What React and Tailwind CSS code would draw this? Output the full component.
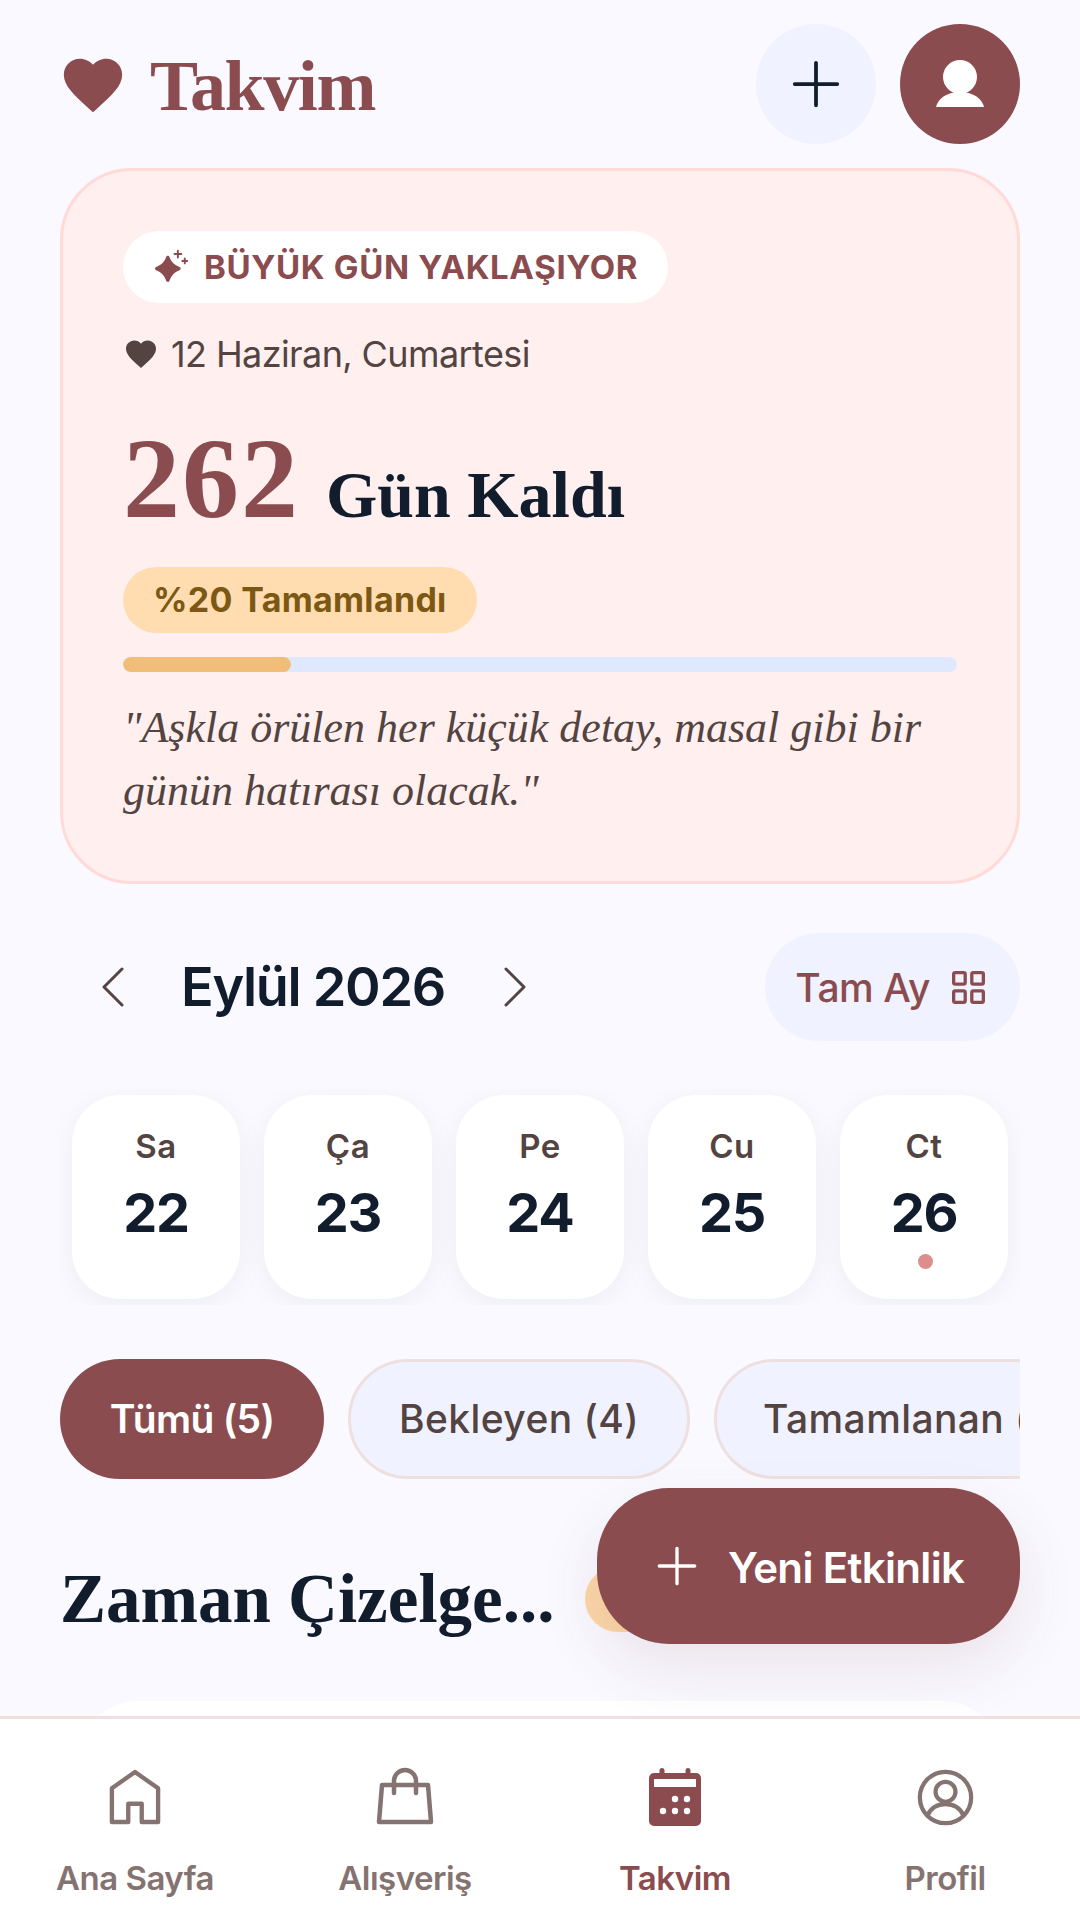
import React from "react";

const days = [
  { name: "Sa", num: "22" },
  { name: "Ça", num: "23" },
  { name: "Pe", num: "24" },
  { name: "Cu", num: "25" },
  { name: "Ct", num: "26", dot: true },
];

function HeartIcon({ className }) {
  return (
    <svg viewBox="0 0 24 24" className={className} fill="currentColor">
      <path d="M12 21.35l-1.45-1.32C5.4 15.36 2 12.28 2 8.5 2 5.42 4.42 3 7.5 3c1.74 0 3.41.81 4.5 2.09C13.09 3.81 14.76 3 16.5 3 19.58 3 22 5.42 22 8.5c0 3.78-3.4 6.86-8.55 11.54L12 21.35z" />
    </svg>
  );
}

function PlusIcon({ className, width = 1.5 }) {
  return (
    <svg viewBox="0 0 24 24" className={className} fill="none" stroke="currentColor" strokeWidth={width} strokeLinecap="round">
      <path d="M12 3.500v17M3.500 12h17" />
    </svg>
  );
}

function NavItem({ label, active, children }) {
  return (
    <div className={`flex flex-col items-center w-[270px] ${active ? "text-[#8B4C4F]" : "text-[#857371]"}`}>
      <div className="h-[78px] flex items-center justify-center">{children}</div>
      <span className="mt-[22px] text-[33px] font-semibold leading-[40px] tracking-[-0.5px]">{label}</span>
    </div>
  );
}

export default function App() {
  return (
    <div className="relative w-[1080px] h-[1920px] flex flex-col overflow-hidden bg-[#F9F9FF] font-['Inter',sans-serif]">
      <main className="h-[1716px] shrink-0 overflow-hidden px-[60px] pt-[24px]">
        {/* Header */}
        <header className="flex items-center justify-between h-[120px]">
          <div className="flex items-center">
            <HeartIcon className="w-[70px] h-[70px] text-[#8B4C4F] -ml-[2px] mt-[2px]" />
            <h1 className="ml-[22px] mt-[3px] font-['Liberation_Serif',serif] font-bold text-[72px] leading-none tracking-[-1.4px] text-[#8B4C4F]">Takvim</h1>
          </div>
          <div className="flex items-center gap-[24px]">
            <div className="w-[120px] h-[120px] rounded-full bg-[#F0F3FF] flex items-center justify-center">
              <PlusIcon className="w-[60px] h-[60px] text-[#111C2D]" />
            </div>
            <div className="w-[120px] h-[120px] rounded-full bg-[#8B4C4F] flex items-center justify-center">
              <svg viewBox="0 0 48 48" className="w-[48px] h-[48px]" fill="#fff">
                <circle cx="24" cy="17" r="17" />
                <path d="M0 47c2-8 10-15 24-15s22 7 24 15z" />
              </svg>
            </div>
          </div>
        </header>

        {/* Countdown card */}
        <section className="mt-[24px] h-[716px] rounded-[72px] border-[3px] border-[#FFDAD7] bg-[#FFF0EF] px-[60px] pt-[60px]">
          <div className="inline-flex items-center h-[72px] rounded-full bg-white pl-[30px] pr-[30px]">
            <svg viewBox="0 0 34 34" className="w-[36px] h-[36px] text-[#8B4C4F]" fill="currentColor">
              <path d="M14 8c1.500 5 4 8 10.500 10.500-6.500 2.500-9 5.500-10.500 11-1.500-5.500-4-8.500-10.500-11C10 16 12.500 13 14 8z" stroke="currentColor" strokeWidth="3.200" strokeLinejoin="round" />
              <path d="M23.500 1.500v6.500M20.300 4.700h6.500M30 9v4.600M27.700 11.300h4.600" stroke="currentColor" strokeWidth="1.800" strokeLinecap="round" fill="none" />
            </svg>
            <span className="ml-[15px] text-[33px] font-bold leading-none text-[#8B4C4F] tracking-[0.65px]">BÜYÜK GÜN YAKLAŞIYOR</span>
          </div>
          <div className="mt-[24px] flex items-center h-[54px]">
            <HeartIcon className="w-[36px] h-[36px] text-[#534341]" />
            <span className="ml-[12px] text-[36px] leading-none text-[#534341] tracking-[-0.6px]">12 Haziran, Cumartesi</span>
          </div>
          <div className="mt-[38px] flex items-baseline h-[120px]">
            <span className="font-['Liberation_Serif',serif] font-bold text-[114px] leading-[120px] tracking-[2px] text-[#8B4C4F]">262</span>
            <span className="ml-[26px] font-['Liberation_Serif',serif] font-bold text-[66px] leading-[120px] text-[#111C2D]">Gün Kaldı</span>
          </div>
          <div className="mt-[28px] inline-flex items-center h-[66px] rounded-full bg-[#FFDDB1] px-[30px]">
            <span className="text-[34px] font-bold leading-none tracking-[0.3px] text-[#7C5814]">%20 Tamamlandı</span>
          </div>
          <div className="mt-[24px] h-[15px] rounded-full bg-[#DEE8FF] overflow-hidden">
            <div className="w-[168px] h-full rounded-full bg-[#F0BE78]" />
          </div>
          <p className="mt-[24px] font-['Liberation_Serif',serif] italic text-[44px] leading-[63px] text-[#534341]">
            "Aşkla örülen her küçük detay, masal gibi bir günün hatırası olacak."
          </p>
        </section>

        {/* Month switcher */}
        <div className="mt-[49px] flex items-center justify-between h-[108px]">
          <div className="flex items-center">
            <svg viewBox="0 0 24 48" className="ml-[40px] w-[24px] h-[48px] text-[#534341]" fill="none" stroke="currentColor" strokeWidth="3" strokeLinecap="round" strokeLinejoin="round">
              <path d="M22 6L4 24l18 18" />
            </svg>
            <h2 className="ml-[57px] text-[54px] font-semibold leading-none tracking-[-1.3px] text-[#111C2D]">Eylül 2026</h2>
            <svg viewBox="0 0 24 48" className="ml-[59px] w-[24px] h-[48px] text-[#534341]" fill="none" stroke="currentColor" strokeWidth="3" strokeLinecap="round" strokeLinejoin="round">
              <path d="M2 6l18 18L2 42" />
            </svg>
          </div>
          <div className="flex items-center h-[108px] rounded-full bg-[#F0F3FF] pl-[30px] pr-[35px]">
            <span className="text-[39px] font-medium leading-none tracking-[-0.4px] text-[#8B4C4F]">Tam Ay</span>
            <svg viewBox="0 0 30 30" className="ml-[22px] w-[33px] h-[33px] text-[#8B4C4F]" fill="none" stroke="currentColor" strokeWidth="3">
              <rect x="1.500" y="1.500" width="10.500" height="10.500" rx="1.500" />
              <rect x="18" y="1.500" width="10.500" height="10.500" rx="1.500" />
              <rect x="1.500" y="18" width="10.500" height="10.500" rx="1.500" />
              <rect x="18" y="18" width="10.500" height="10.500" rx="1.500" />
            </svg>
          </div>
        </div>

        {/* Week strip */}
        <div className="mt-[48px] flex gap-[24px] overflow-hidden px-[12px] pt-[6px] pb-[6px]">
          {days.map((d) => (
            <div key={d.num} className="relative w-[168px] h-[204px] shrink-0 rounded-[48px] bg-white shadow-[0_6px_30px_rgba(17,28,45,0.05)] flex flex-col items-center pt-[30px]">
              <span className="text-[33px] font-semibold leading-[42px] tracking-[0.5px] text-[#534341]">{d.name}</span>
              <span className="mt-[13px] text-[54px] font-bold leading-[66px] tracking-[-1.2px] text-[#111C2D]">{d.num}</span>
              {d.dot && <span className="mt-[8px] w-[15px] h-[15px] rounded-full bg-[#DC8E8C] translate-x-[1px]" />}
            </div>
          ))}
        </div>

        {/* Filter chips */}
        <div className="mt-[54px] flex gap-[24px] overflow-hidden">
          <div className="shrink-0 h-[120px] w-[264px] rounded-full bg-[#8B4C4F] flex items-center justify-center text-[39px] font-semibold tracking-[-0.7px] text-white">Tümü (5)</div>
          <div className="shrink-0 h-[120px] w-[342px] rounded-full bg-[#F0F3FF] border-[3px] border-[#EEE0DF] flex items-center justify-center text-[39px] font-medium tracking-[0.4px] text-[#534341]">Bekleyen (4)</div>
          <div className="shrink-0 h-[120px] w-[440px] rounded-full bg-[#F0F3FF] border-[3px] border-[#EEE0DF] pl-[46px] flex items-center whitespace-nowrap text-[39px] font-medium tracking-[0.4px] text-[#534341]">Tamamlanan (1)</div>
        </div>

        {/* Timeline header */}
        <div className="mt-[84px] flex items-center h-[72px]">
          <h2 className="w-[500px] whitespace-nowrap font-['Liberation_Serif',serif] font-bold text-[69px] leading-none text-[#111C2D]">Zaman Çizelge...</h2>
          <div className="ml-[25px] w-[200px] h-[66px] rounded-full bg-[#FBD7A8]" />
        </div>
        <div className="mt-[66px] mx-[18px] h-[120px] rounded-[72px] bg-white" />
      </main>

      {/* Floating button */}
      <div className="absolute right-[60px] bottom-[276px] w-[423px] h-[156px] rounded-[72px] bg-[#8B4C4F] shadow-[0_24px_60px_rgba(139,76,79,0.12)] flex items-center pl-[55px]">
        <PlusIcon className="w-[50px] h-[50px] text-white" width={1.6} />
        <span className="ml-[26px] mt-[4px] text-[42px] font-semibold leading-none tracking-[-0.65px] text-white">Yeni Etkinlik</span>
      </div>

      {/* Bottom nav */}
      <nav className="relative flex-1 bg-white border-t-[3px] border-[#EEE0DF] flex pt-[39px]">
        <NavItem label="Ana Sayfa">
          <svg viewBox="0 0 54 58" className="w-[52px] h-[56px]" fill="none" stroke="currentColor" strokeWidth="4.500" strokeLinejoin="round">
            <path d="M3 55V20L27 3l24 17v35H34V36H20v19z" />
          </svg>
        </NavItem>
        <NavItem label="Alışveriş">
          <svg viewBox="0 0 60 60" className="w-[60px] h-[60px]" fill="none" stroke="currentColor" strokeWidth="4.500" strokeLinejoin="round" strokeLinecap="round">
            <path d="M7 18h46l3 37H4z" />
            <path d="M19 26V14a11 11 0 0 1 22 0v12" />
          </svg>
        </NavItem>
        <NavItem label="Takvim" active>
          <svg viewBox="0 0 52 58" className="w-[52px] h-[58px]" fill="currentColor">
            <path fillRule="evenodd" d="M13 0a2.500 2.500 0 0 1 2.500 2.500V5h21V2.500a2.500 2.500 0 0 1 5 0V5H47a5 5 0 0 1 5 5v43a5 5 0 0 1-5 5H5a5 5 0 0 1-5-5V10a5 5 0 0 1 5-5h5.500V2.500A2.500 2.500 0 0 1 13 0zM5 11v8h42v-8z" />
            <g fill="#fff">
              <circle cx="26" cy="31" r="3.200" /><circle cx="38" cy="31" r="3.200" />
              <circle cx="14" cy="43" r="3.200" /><circle cx="26" cy="43" r="3.200" /><circle cx="38" cy="43" r="3.200" />
            </g>
          </svg>
        </NavItem>
        <NavItem label="Profil">
          <svg viewBox="0 0 60 60" className="w-[57px] h-[57px]" fill="none" stroke="currentColor" strokeWidth="4.500">
            <circle cx="30" cy="30" r="27" />
            <circle cx="30" cy="24" r="10.500" />
            <path d="M11 49c4-9 11-12 19-12s15 3 19 12" />
          </svg>
        </NavItem>
      </nav>
    </div>
  );
}
